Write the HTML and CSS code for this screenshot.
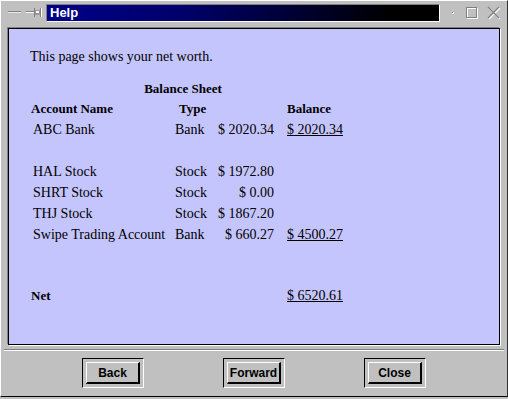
FILE: index.html
```html
<!DOCTYPE html>
<html lang="en">
<head>
    <meta charset="UTF-8">
    <title>Help</title>
    <link rel="stylesheet" href="styles.css">
</head>
<body>
    <div class="window">
        <div class="titlebar">
            <svg class="tb-left" width="45" height="18" viewBox="0 0 45 18">
                <!-- minimize -->
                <rect x="7" y="7" width="13" height="1" fill="#808080"/>
                <rect x="7" y="8" width="13" height="1" fill="#e8e8e8"/>
                <!-- pin -->
                <rect x="25" y="7" width="8" height="1" fill="#808080"/>
                <rect x="25" y="8" width="8" height="1" fill="#fff"/>
                <rect x="33" y="4" width="1" height="9" fill="#808080"/>
                <rect x="34" y="6" width="5" height="5" fill="#9a9a9a"/>
                <rect x="35" y="7" width="3" height="2" fill="#fff"/>
                <rect x="39" y="4" width="1" height="9" fill="#808080"/>
                <rect x="40" y="4" width="1" height="9" fill="#fff"/>
            </svg>
            <div class="title">Help</div>
            <svg class="tb-right" width="66" height="18" viewBox="0 0 66 18">
                <!-- iconify -->
                <rect x="12" y="8" width="2" height="2" fill="#fff"/>
                <rect x="12" y="8" width="1" height="1" fill="#808080"/>
                <!-- maximize -->
                <rect x="27.5" y="4.5" width="10" height="10" fill="none" stroke="#fff"/>
                <rect x="26.5" y="3.5" width="10" height="10" fill="none" stroke="#808080"/>
                <!-- close -->
                <path d="M49 4 L60 15 M60 4 L49 15" stroke="#fff" stroke-width="1.2"/>
                <path d="M48 3 L59 14 M59 3 L48 14" stroke="#808080" stroke-width="1.2"/>
            </svg>
        </div>

        <div class="panel">
            <p class="intro">This page shows your net worth.</p>
            <table class="sheet">
                <colgroup>
                    <col class="col-name">
                    <col class="col-type">
                    <col class="col-amt">
                    <col class="col-bal">
                </colgroup>
                <tr class="title-row"><th colspan="4">Balance Sheet</th></tr>
                <tr>
                    <th>Account Name</th>
                    <th class="type">Type</th>
                    <th></th>
                    <th class="bal">Balance</th>
                </tr>
                <tr>
                    <td class="name">ABC Bank</td>
                    <td class="type">Bank</td>
                    <td class="amt">$ 2020.34</td>
                    <td class="bal"><u>$ 2020.34</u></td>
                </tr>
                <tr class="gap"><td colspan="4"></td></tr>
                <tr>
                    <td class="name">HAL Stock</td>
                    <td class="type">Stock</td>
                    <td class="amt">$ 1972.80</td>
                    <td class="bal"></td>
                </tr>
                <tr>
                    <td class="name">SHRT Stock</td>
                    <td class="type">Stock</td>
                    <td class="amt">$ 0.00</td>
                    <td class="bal"></td>
                </tr>
                <tr>
                    <td class="name">THJ Stock</td>
                    <td class="type">Stock</td>
                    <td class="amt">$ 1867.20</td>
                    <td class="bal"></td>
                </tr>
                <tr>
                    <td class="name">Swipe Trading Account</td>
                    <td class="type">Bank</td>
                    <td class="amt">$ 660.27</td>
                    <td class="bal"><u>$ 4500.27</u></td>
                </tr>
                <tr class="gap-wide"><td colspan="4"></td></tr>
                <tr>
                    <th>Net</th>
                    <td></td>
                    <td></td>
                    <td class="bal"><u>$ 6520.61</u></td>
                </tr>
            </table>
        </div>

        <div class="separator"></div>

        <div class="buttons">
            <div class="btn-frame"><button class="btn" type="button">Back</button></div>
            <div class="btn-frame"><button class="btn" type="button">Forward</button></div>
            <div class="btn-frame"><button class="btn" type="button">Close</button></div>
        </div>
    </div>
</body>
</html>
```

FILE: styles.css
```css
html, body {
    margin: 0;
}

body {
    background-color: #c0c0c0;
    font-family: "Liberation Serif", serif;
    color: #000;
}

.window {
    box-sizing: border-box;
    width: 508px;
    height: 397px;
    border: 1px solid;
    border-color: #fff #303030 #000 #fff;
    padding-top: 3px;
    display: flex;
    flex-direction: column;
}

/* title bar */
.titlebar {
    display: flex;
    height: 18px;
}

.tb-left,
.tb-right {
    flex: none;
    display: block;
}

.title {
    box-sizing: border-box;
    width: 394px;
    height: 18px;
    border: 1px solid;
    border-color: #808080 #fff #fff #808080;
    background: linear-gradient(to right, #000088 0%, #00006a 35%, #000030 65%, #000 88%);
    color: #fff;
    font: bold 13px/16px "Liberation Sans", sans-serif;
    padding-left: 3px;
}

/* help page */
.panel {
    box-sizing: border-box;
    width: 492px;
    height: 317px;
    margin: 6px 0 0 7px;
    border: 1px solid #000;
    box-shadow: -1px -1px 0 #808080, 1px 1px 0 #fff;
    background-color: #c5c5fd;
    padding: 17px 0 0 21px;
}

.intro {
    margin: 0 0 13px;
    font-size: 14px;
    line-height: 21px;
}

.sheet {
    table-layout: fixed;
    width: 311px;
    border-collapse: collapse;
    margin-left: 1px;
    font-size: 14px;
}

.col-name { width: 142px; }
.col-type { width: 38px; }
.col-amt { width: 65px; }
.col-bal { width: 66px; }

.sheet th,
.sheet td {
    padding: 0;
    line-height: 21px;
    vertical-align: baseline;
    white-space: nowrap;
}

.sheet th {
    font-size: 13px;
    text-align: left;
}

.sheet .title-row th {
    line-height: 18px;
    text-align: center;
    padding-right: 7px;
}

.sheet td.name,
.sheet td.type {
    padding-left: 2px;
}

.sheet th.type {
    padding-left: 6px;
}

.sheet .amt {
    text-align: right;
    padding-right: 2px;
}

.sheet .bal {
    padding-left: 11px;
}

.gap td {
    height: 21px;
}

.gap-wide td {
    height: 40px;
}

/* bottom buttons */
.separator {
    border-top: 1px solid #808080;
    border-bottom: 1px solid #fff;
    margin: 4px 3px 0;
}

.buttons {
    display: flex;
    justify-content: center;
    gap: 79px;
    padding-top: 7px;
}

.btn-frame {
    border: 1px solid;
    border-color: #000 #fff #fff #000;
    padding: 3px;
}

.btn {
    display: block;
    box-sizing: border-box;
    width: 54px;
    height: 22px;
    margin: 0;
    padding: 0;
    border-style: solid;
    border-width: 1px 2px 2px 1px;
    border-color: #fff #000 #000 #fff;
    background-color: #c0c0c0;
    color: #000;
    font: bold 12px "Liberation Sans", sans-serif;
    text-align: center;
}
```
